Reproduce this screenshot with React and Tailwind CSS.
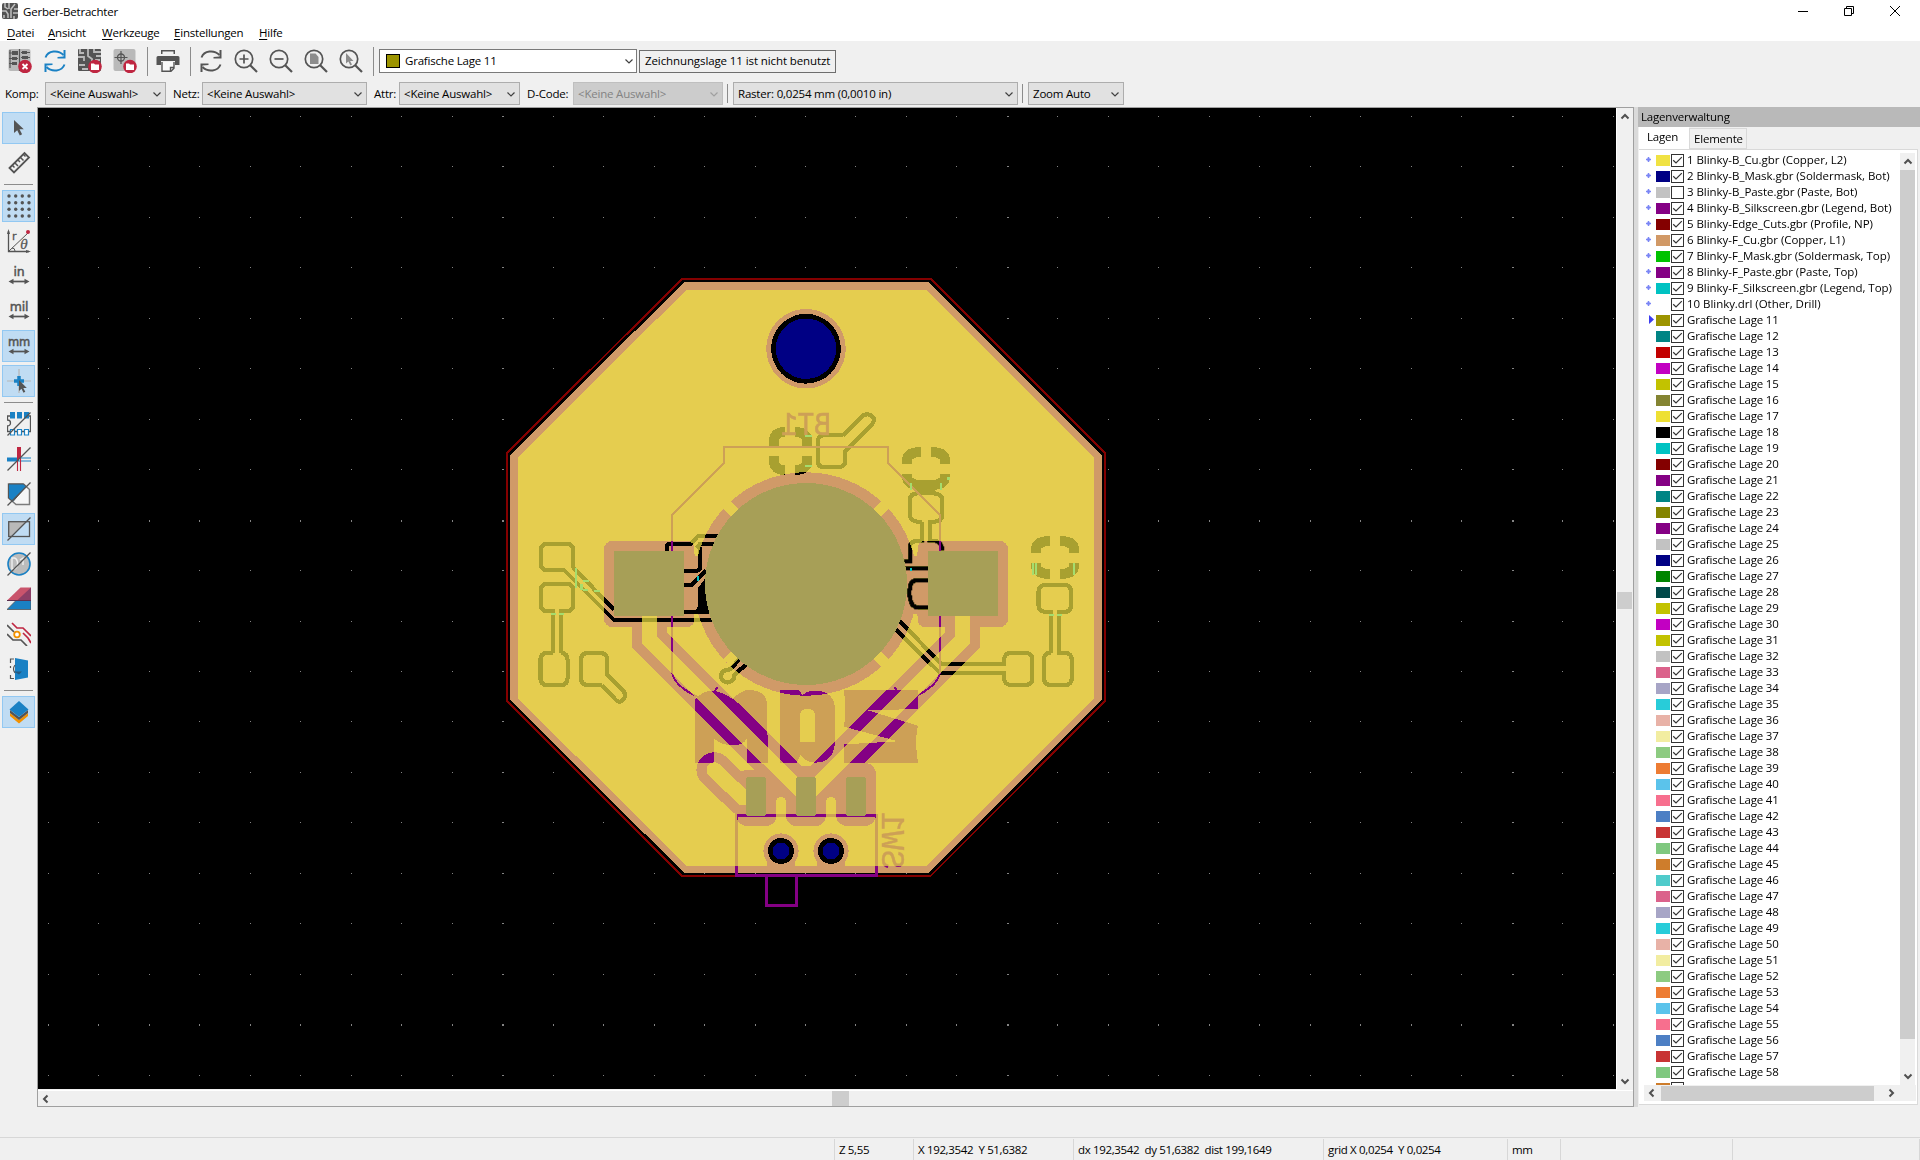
import React from "react";

const LAYERS = [
  ["1 Blinky-B_Cu.gbr (Copper, L2)", "#f0e243"],
  ["2 Blinky-B_Mask.gbr (Soldermask, Bot)", "#000084"],
  ["3 Blinky-B_Paste.gbr (Paste, Bot)", "#c2c2c2"],
  ["4 Blinky-B_Silkscreen.gbr (Legend, Bot)", "#840084"],
  ["5 Blinky-Edge_Cuts.gbr (Profile, NP)", "#840000"],
  ["6 Blinky-F_Cu.gbr (Copper, L1)", "#d19966"],
  ["7 Blinky-F_Mask.gbr (Soldermask, Top)", "#00c200"],
  ["8 Blinky-F_Paste.gbr (Paste, Top)", "#840084"],
  ["9 Blinky-F_Silkscreen.gbr (Legend, Top)", "#00c2c2"],
  ["10 Blinky.drl (Other, Drill)", "#ffffff"],
  ...[
    "#9c9400", "#008484", "#c20000", "#c200c2", "#c2c200", "#848432", "#eee033", "#000000", "#00c2c2", "#840000",
    "#840084", "#008484", "#848400", "#840084", "#c2c2c2", "#000084", "#008400", "#004848", "#c2c200", "#c200c2",
    "#c2c200", "#c2c2c2", "#db628b", "#a7a5c6", "#28ccd9", "#e8b2a7", "#f2eda1", "#8dcb81", "#ed7c33", "#5bc3eb",
    "#f76f8e", "#4d7fc4", "#c83434", "#7fc87f", "#ce7d2c", "#4fcbcb", "#db628b", "#a7a5c6", "#28ccd9", "#e8b2a7",
    "#f2eda1", "#8dcb81", "#ed7c33", "#5bc3eb", "#f76f8e", "#4d7fc4", "#c83434", "#7fc87f",
  ].map((c, i) => [`Grafische Lage ${i + 11}`, c]),
  ["", "#ce7d2c"],
];

const G = "#545454";
const B = "#1a81c4";
const R = "#bf2641";

const Svg = ({ s = 24, vb = "0 0 24 24", children }) => (
  <svg width={s} height={s} viewBox={vb} fill="none" className="block shrink-0">{children}</svg>
);

function Arrow({ d = "down", color = "#505050", w = 2 }) {
  const p = { down: "M1.5 3.5 5 7 8.5 3.5", up: "M1.5 6.5 5 3 8.5 6.5", left: "M6.5 1.5 3 5 6.5 8.5", right: "M3.5 1.5 7 5 3.5 8.5" }[d];
  return <Svg s={10} vb="0 0 10 10"><path d={p} stroke={color} strokeWidth={w} /></Svg>;
}

/* ---------- toolbar icons ---------- */
const BoardArt = () => (
  <>
    <rect x="0.5" y="0" width="22" height="22" rx="2" fill="#b9b9b9" />
    <path d="M4 2h6v4H4zM4 8h5v3H4zM4 13h5v3H4zM14 2h5v3h-5zM14 7h6v3h-6zM14 12h6v3h-6z" fill={G} />
    <path d="M1 4h8M1 9.500h9M1 14.500h8M11.500 0v22M13 3.500h9M13 8.500h9M13 13.500h9M2 1v18" stroke={G} strokeWidth="1.200" />
  </>
);
const Folder = () => (
  <>
    <circle cx="17" cy="17.500" r="6.800" fill={R} />
    <path d="M13 14.500h3l1 1h4v5.500h-8z" fill="#fff" />
  </>
);
const ClearIcon = () => (
  <Svg><BoardArt /><circle cx="17" cy="17.500" r="6.800" fill={R} /><path d="m14.500 15 5 5m0-5-5 5" stroke="#fff" strokeWidth="1.800" /></Svg>
);
const OpenIcon = () => (
  <Svg><rect x="0" y="0" width="23" height="22" rx="1" fill={G} /><path d="M2 0v4h4M10 0v7l4 3v11M16 0v3h7M0 8h6v4M18 7h5M17 11h5M1 16h6M4 20h6" stroke="#b9b9b9" strokeWidth="1.800" /><Folder /></Svg>
);
const DrillIcon = () => (
  <Svg><rect x="0.500" y="0" width="22" height="22" rx="2" fill="#b9b9b9" /><circle cx="8" cy="8.500" r="3.500" stroke={G} strokeWidth="1.300" /><path d="M8 2v13M1.500 8.500h13" stroke={G} strokeWidth="1.200" /><Folder /></Svg>
);
const Refresh = ({ c = G }) => (
  <Svg><path d="M2.500 8.500C5 1.500 15 .500 20.500 6M21.500 15.500C19 22.500 9 23.500 3.500 18" stroke={c} strokeWidth="1.900" /><path d="M22.500 1v8.500H14.500V8l6-.500V1zM1.500 23v-8.500h8V16l-6 .500V23z" fill={c} /></Svg>
);
const Printer = () => (
  <Svg><path d="M5 1h14v4h-1.500V2.500h-11V5H5z" fill={G} /><path d="M2 7h20q1.500 0 1.500 1.500V16H19v-4H5v4H.500V8.500Q.500 7 2 7z" fill={G} /><path d="M6 13v9.200h9l3-3V13z" fill="#fafafa" /><path d="M6 13v9.200h9l3-3V13M14.500 22v-3.500H18" stroke={G} strokeWidth="1.400" /></Svg>
);
const Mag = ({ children }) => (
  <Svg><circle cx="10" cy="10" r="8.700" stroke={G} strokeWidth="1.700" /><path d="m16.200 16.200 6.800 6.800" stroke={G} strokeWidth="2.200" />{children}</Svg>
);
const AppIcon = () => (
  <Svg s={16} vb="0 0 16 16"><rect width="16" height="16" rx="2" fill={G} /><path d="M3 0v4l3 2M7 0v6M13 1 9 6v9M0 8h4l2 3v4M12 6h4M11 10h5M2 12v3M12 13v3" stroke="#c0c0c0" strokeWidth="1.500" /></Svg>
);

/* ---------- left toolbar icons ---------- */
const unit = (t) => (
  <Svg>
    <text x="12" y="11.500" textAnchor="middle" fontFamily="DejaVu Sans" fontSize={t === "mm" ? 11.500 : 12.500} stroke={G} strokeWidth=".5" fill={G}>{t}</text>
    <path d="M5 17.500h14" stroke={G} strokeWidth="1.700" /><path d="M1.500 17.500 6.500 14.800v5.400zM22.500 17.500l-5-2.700v5.400z" fill={G} />
  </Svg>
);
const Slash = () => <path d="M.500 23.500 23.500.500" stroke={G} strokeWidth="1.200" />;
const LEFT = [
  [1, <Svg><path d="M7 4v13l3.200-2.800 2.600 5.200 2.300-1.200-2.600-5h4.300z" fill={G} /></Svg>],
  [0, <Svg><path d="M2.500 17 17.500 2l4.500 4.500L7 21.500z" stroke={G} strokeWidth="1.800" /><path d="m5.500 14.500 2 2m.500-4.500 3 3m0-6 2 2m.500-4.500 3 3m0-6 2 2" stroke={G} strokeWidth="1.500" /></Svg>],
  "sep",
  [1, <Svg>{[2, 8.700, 15.300, 22].map((y) => [2, 8.700, 15.300, 22].map((x) => <circle key={x + "-" + y} cx={x} cy={y} r="1.700" fill={G} />))}</Svg>],
  [0, <Svg><path d="M1.500 2v20.500H22" stroke={G} strokeWidth="1.300" /><path d="M1.500 0 0 5h3zM24 22.500l-5-1.500v3z" fill={G} /><path d="M2 22 21 4M5 19q3 0 3 3" stroke={G} strokeWidth="1" /><circle cx="21" cy="3" r="2" fill={R} /><text x="5" y="10.500" fontFamily="DejaVu Sans" fontSize="11" stroke={G} strokeWidth=".3" fill={G}>r</text><text x="13.500" y="19.500" fontFamily="DejaVu Serif" fontStyle="italic" fontSize="12" stroke={G} strokeWidth=".3" fill={G}>θ</text></Svg>],
  [0, unit("in")],
  [0, unit("mil")],
  [1, unit("mm")],
  [1, <Svg><path d="M12 0v24M0 12h24" stroke="#b5b5b5" strokeWidth="1.200" /><path d="M12 7v10M7 12h10" stroke={B} strokeWidth="3.500" /><path d="M12 11v11l2.500-2.200 2 4 1.800-1-2-3.800h3.500z" fill={G} /></Svg>],
  "sep",
  [0, <Svg><path d="M3.500 4H.500v4a3 3 0 0 1 0 6v5.500h23V4h-3" stroke={G} strokeWidth="1.300" /><path d="M3 0h5v6.500H3zM10 0h5v6.500h-5zM17 0h5v6.500h-5z" fill={B} /><path d="M3.500 17.500h4v5.500h-4zM10.500 17.500h4v5.500h-4zM17.500 17.500h4v5.500h-4z" fill="#fff" stroke={B} strokeWidth="1.200" /><Slash /></Svg>],
  [0, <Svg><path d="M0 12.500h12" stroke={B} strokeWidth="4" /><path d="M12 11h12M12 14h12" stroke={B} strokeWidth="1.100" /><path d="M12 0v12" stroke={R} strokeWidth="4" /><path d="M10.500 12v12M13.500 12v12" stroke={R} strokeWidth="1.100" /><Slash /></Svg>],
  [0, <Svg><path d="M1.500 2h15l6 5.500v15H9L1.500 16z" fill="#f6f6f6" stroke="#7b7b7b" strokeWidth="1.500" /><path d="M1.500 2h15l2.500 2.500L6 19.500 1.500 16z" fill={B} stroke={G} strokeWidth="1" /><Slash /></Svg>],
  [1, <Svg><path d="M2 5h17L3.500 19.500H2z" fill="#b9b9b9" /><rect x="1.700" y="4.700" width="20.800" height="14.800" stroke={G} strokeWidth="1.300" /><Slash /></Svg>],
  [0, <Svg><circle cx="12" cy="12" r="11" fill="#bcbcbc" stroke={B} strokeWidth="1.600" /><path d="M5 6v11h2.500q3-1 3-5.500t-3-5.500zM13 8l3-2v7" stroke="#f0f0f0" strokeWidth="1.400" /><Slash /></Svg>],
  [0, <Svg><path d="M0 22.500 10 12.500h14v10z" fill={B} stroke={G} strokeWidth=".8" /><path d="M0 13.500 13.500.500H24v13z" fill="#c9546c" /><path d="M24 .500v13H10z" fill="#8c3f66" /><path d="M0 13.500h24" stroke="#5c3050" strokeWidth="1" /></Svg>],
  [0, <Svg><path d="M5 1l5 5h6l8 8M16 11l5 5v0l3 5" stroke={R} strokeWidth="1.700" /><path d="M0 3l7 7M10 12M0 12l6 6h8l6 6" stroke={G} strokeWidth="1.700" /><circle cx="10" cy="12.500" r="2.800" fill="#fff" stroke="#f29100" strokeWidth="1.800" /></Svg>],
  [0, <Svg><path d="M8 1v22l13-2.500v-17z" fill={B} /><path d="M7 2H3.500v4M3.500 18v3.500H7M3.500 9v2" stroke={G} strokeWidth="1.200" /><path d="M8 8q-3 4 0 8" stroke={G} strokeWidth="1.200" /><path d="M7 14.500h8l-3 3z" fill="#255a80" /></Svg>],
  "sep",
  [1, <Svg><path d="m3 13 9 7 9-7v3l-9 7.500L3 16z" fill="#f29100" /><path d="m3 10 9 7 9-7v3l-9 7L3 13z" fill={G} /><path d="m12 1 9.500 8.500L12 17 2.500 9.500z" fill={B} /></Svg>],
];

/* ---------- board drawing ---------- */
const OCT = "684.300,282 929,282 1101.500,455.300 1101.500,700 929,873 684.300,873 510,700 510,455.300";
const OCT_IN = "686.200,290 926.600,290 1094,457 1094,698.300 926.600,866 686.200,866 518.200,698.300 518.200,457";

function Copper({ o, y }) {
  return (
    <>
      <g fill={o}>
        <rect x="604" y="541" width="91" height="86" rx="8" />
        <rect x="917" y="541" width="91" height="86" rx="8" />
        <rect x="686" y="556" width="30" height="58" />
        <rect x="896" y="556" width="30" height="58" />
      </g>
      <g fill="none" stroke={o} strokeWidth="35.500">
        <path d="M649.300 610V639.500L806 796" />
        <path d="M962.700 610V639.500L806 796" />
        <path d="M714.200 770 743 797.500H756" strokeLinecap="round" strokeLinejoin="round" />
      </g>
      <g fill={o}>
        <rect x="736.500" y="770" width="40" height="56" rx="10" />
        <rect x="786" y="770" width="40" height="56" rx="10" />
        <rect x="836" y="763" width="40" height="63" rx="11" />
        <path d="M745 770 790 815H822L866 768 850 762 806 780 760 770zM800 766h12v20h-12z" />
      </g>
      <circle cx="806" cy="584" r="106" fill="none" stroke={o} strokeWidth="11.500" />
      <g stroke={y} fill="none">
        <path d="M727 505 740 518M885 505 872 518M727 663 740 650M885 663 872 650" strokeWidth="10.500" />
        <path d="M649.300 616V639.500L806 796" strokeWidth="15.500" />
        <path d="M962.700 616V639.500L806 796" strokeWidth="15.500" />
        <path d="M714.200 770 743 797.500H756" strokeWidth="15.500" strokeLinecap="round" />
        <path d="M781 802V826M831 802V826" strokeWidth="10" strokeLinecap="round" />
        <path d="M696 545v7M915 545v7M696 616v6M915 616v6" strokeWidth="5" strokeLinecap="round" />
      </g>
    </>
  );
}

const Frag = ({ x, y, w, h, g1, g2, v1, v2 }) => {
  const r = 9, a = x + 5, b = x + w - 5, t = y + 5, u = y + h - 5;
  return (
    <path strokeWidth="10" d={`M${a} ${v1}V${t + r}Q${a} ${t} ${g1} ${t}M${b} ${v1}V${t + r}Q${b} ${t} ${g2} ${t}M${a} ${v2}V${u - r}Q${a} ${u} ${g1} ${u}M${b} ${v2}V${u - r}Q${b} ${u} ${g2} ${u}`} />
  );
};

const Traces = ({ c }) => (
  <g fill="none" stroke={c} strokeWidth="4.200">
    <path d="M564.700 570H547Q541 570 541 564V550Q541 544 547 544H567Q573 544 573 550V567L614 610" />
    <path d="M564 570 614 620H711.700" />
    <path d="M553.300 653V611H547Q541 611 541 605V590Q541 584 547 584H567Q573 584 573 590V605Q573 611 567 611H561V653" />
    <path d="M553.300 653H547Q540.400 653 540.400 660V678Q540.400 685 547 685H561Q567.600 685 567.600 678V660Q567.600 653 561 653" />
    <path d="M602 685H588Q581 685 581 678V660Q581 653 588 653H600Q607.300 653 607.300 660V675L623 690Q627 696 623 700T615 699L602 685" />
    <g transform="translate(530 520) scale(.33333)" strokeWidth="12.500">
      <path d="M410 93V84Q410 71 422 71H482L505 47H570M560 71H510L500 85M511 80V137Q511 153 495 153H462M462 195H485L528 150" />
      <path d="M503 205 528 172 540 282H462V270H490Q503 270 503 258z" fill={c} stroke="none" />
    </g>
    <g transform="translate(500 270) scale(.3954 .33333)">
      <path vectorEffect="non-scaling-stroke" d="M1067 755H1055Q1037 752 1037 735V690Q1037 670 1057 670H1098Q1118 672 1118 690V735Q1118 755 1098 755H1087V812H1100Q1118 815 1118 842M1067 755V812H1055Q1037 815 1037 830V873H1023M1025 895H1090M1090 930H1055Q1037 932 1037 955L1034 965 1037 985Q1040 1013 1060 1013H1090" />
      <path vectorEffect="non-scaling-stroke" d="M868 495H820Q804 497 804 515V572Q804 592 820 592H856Q873 590 873 572V545L940 465Q955 440 930 433 920 432 912 443L868 497" />
    </g>
    <g transform="translate(500 590) scale(.3954 .33333)">
      <path vectorEffect="non-scaling-stroke" d="M1009 92 1118 223H1275V210Q1275 188 1295 188H1328Q1346 190 1346 208V265Q1346 285 1328 285H1295Q1275 285 1275 265V249H1113L996 112" />
      <path vectorEffect="non-scaling-stroke" d="M1393 188V66H1380Q1362 64 1362 46V5Q1362-16 1382-16H1425Q1444-16 1444 5V46Q1444 66 1425 66H1414V188H1428Q1446 190 1446 208V265Q1446 285 1428 285H1395Q1376 285 1376 265V208Q1376 188 1393 188" />
      <path vectorEffect="non-scaling-stroke" d="M607 205 583 238Q555 240 560 265 575 290 592 265V255L622 224" />
    </g>
    <Frag x={769} y={427} w={43} h={48} g1={785} g2={795} v1={446} v2={456} />
    <Frag x={902} y={447} w={48} h={43} g1={921} g2={931} v1={464} v2={474} />
    <Frag x={1031} y={536} w={48} h={43} g1={1050} g2={1060} v1={553} v2={563} />
    <path d="M912 480H940L936 489 932 493H918L912 488z" fill={c} stroke="none" />
  </g>
);

const Silk = ({ c }) => (
  <g fill={c}>
    <g fill="none" stroke={c} strokeWidth="2">
      <path d="M672 628V515L724.200 463V447H888.300V463L940 515V628" />
      <path d="M672 620V672Q674 686 698 697M940 620V672Q938 686 914 697" />
      <rect x="736.400" y="815.700" width="140" height="59.800" strokeWidth="2.800" />
      <path d="M766.500 876V905.500H796.500V876" strokeWidth="3" />
      <path d="M714 692q3-3 3-5M898 692q-3-3-3-5" />
    </g>
    <text transform="matrix(-1 0 0 1 831 435)" fontFamily="Liberation Mono" fontSize="34" stroke={c} strokeWidth=".6" textLength="50" lengthAdjust="spacingAndGlyphs">BT1</text>
    <text transform="matrix(0 -1 -1 0 881.500 869)" fontFamily="Liberation Mono" fontSize="34" stroke={c} strokeWidth=".4" textLength="57" lengthAdjust="spacingAndGlyphs">SW1</text>
    <g transform="translate(500 590) scale(.3954 .33333)">
      <path d="M493 518V330Q510 302 540 302 570 310 588 327 610 300 630 300 675 302 675 345L678 518H625V445Q615 467 585 466 560 465 541 445V518z" />
      <path fillRule="evenodd" d="M708 518V301H757L765 315Q780 300 800 302 847 305 847 360V455Q845 518 797 518 770 515 760 495L750 518zM759 456H797V375Q795 357 778 357 760 357 759 375z" />
      <path d="M870 300H1057V357L930 361 1057 407Q1048 450 1057 518H870V463L1007 454 870 410Q876 370 870 300z" />
    </g>
  </g>
);

function Board() {
  const dots = [];
  for (let i = 0; i < 32; i++)
    for (let j = 0; j < 20; j++)
      dots.push(<rect key={i + "-" + j} x={Math.round(47.800 + i * 50.480)} y={Math.round(116 + j * 50.450)} width={i % 10 === 9 ? 2 : 1} height={j % 10 === 8 ? 2 : 1} />);
  return (
    <svg width="1578" height="981" viewBox="38 108 1578 981" className="block bg-black" shapeRendering="crispEdges">
      <mask id="exposed" maskUnits="userSpaceOnUse" x="38" y="108" width="1578" height="981">
        <rect x="38" y="108" width="1578" height="981" fill="#fff" />
        <polygon points={OCT_IN} fill="#000" />
        <Copper o="#fff" y="#000" />
      </mask>
      <g fill="#848484">{dots}</g>
      <polygon points="681.900,279 930.600,279 1105.300,453.300 1105.300,701 930.600,876 681.900,876 506.700,701 506.700,453.300" fill="none" stroke="#840000" strokeWidth="2" />
      <polygon points={OCT} fill="#d09a68" />
      <polygon points={OCT_IN} fill="#e5cd4f" />
      <Copper o="#d09a68" y="#e5cd4f" />
      <Traces c="#a8a030" />
      <g mask="url(#exposed)"><Traces c="#000" /></g>
      <Silk c="#cda056" />
      <g mask="url(#exposed)"><Silk c="#840084" /></g>
      <g fill="#a5dd6e">
        <path d="M575 568h2v20h-2zM580 584h3v6h-3zM583 580h6v2h-6zM583 589h5v2h-5zM594 590h6v2h-6zM551 613h5v2h-5zM559 613h5v2h-5zM805 435h7v2h-7zM805 465h7v2h-7zM910 483h2v7h-2zM940 483h2v7h-2zM947 477h3v3h-3zM1032 563h2v12h-2zM1035 563h2v12h-2zM1073 563h2v12h-2zM1049 614h5v2h-5zM1057 614h5v2h-5z" />
      </g>
      <path d="M697 576h2v5h-2zM910 568h2v3h-2z" fill="#00c2c2" />
      <g fill="#a79f57">
        <circle cx="806" cy="584" r="101" />
        <rect x="614" y="551" width="70" height="65" />
        <rect x="928" y="551" width="70" height="65" />
        <rect x="746" y="777" width="20" height="39" rx="3" />
        <rect x="796" y="777" width="20" height="39" rx="3" />
        <rect x="846" y="777" width="20" height="39" rx="3" />
      </g>
      <circle cx="806" cy="348.700" r="39.800" fill="#d09a68" />
      <circle cx="806" cy="348.700" r="34.900" fill="#000" />
      <circle cx="806" cy="348.700" r="30.200" fill="#000084" />
      {[781, 831].map((x) => (
        <g key={x}>
          <rect x={x - 14} y="860" width="28" height="7" fill="#d09a68" />
          <circle cx={x} cy="851" r="17.600" fill="#d09a68" />
          <circle cx={x} cy="851" r="13" />
          <circle cx={x} cy="851" r="8.400" fill="#000084" />
        </g>
      ))}
    </svg>
  );
}

/* ---------- chrome ---------- */
const Combo = ({ w, children, disabled }) => (
  <div className={"flex h-[23px] shrink-0 items-center justify-between border pr-[3px] pl-[4px] " + w + (disabled ? " border-[#bfbfbf] bg-[#cccccc] text-[#838383]" : " border-[#adadad] bg-[#e1e1e1]")}>
    <span>{children}</span>
    <Arrow w={1.200} color={disabled ? "#a0a0a0" : "#404040"} />
  </div>
);
const VSep = ({ m, h = "h-[29px]" }) => <div className={"w-px shrink-0 bg-[#8c8c8c] " + h + " " + m} />;
const MenuItem = ({ m, children }) => (
  <span className={m}><span className="underline underline-offset-2">{children[0]}</span>{children.slice(1)}</span>
);

function Row({ name, color, i }) {
  return (
    <div className="flex h-4 shrink-0 items-start whitespace-nowrap">
      <div className="flex w-[16px] shrink-0 justify-center pt-[3px]">
        {i < 10 && <Svg s={7} vb="0 0 7 7"><path d="M3.500 1v5M1 3.500h5" stroke="#7b86f5" strokeWidth="1.500" /><path d="M3.500 1.500l2 2-2 2-2-2z" fill="#7b86f5" /></Svg>}
        {i === 10 && <div className="-mt-px ml-[6px]"><Svg s={9} vb="0 0 9 9"><path d="M2 0v9l5-4.500z" fill="#3c3cf0" /></Svg></div>}
      </div>
      <div className="mt-[2px] h-[11px] w-[14px] shrink-0" style={{ backgroundColor: color }} />
      <div className="mt-px ml-px flex h-[13px] w-[13px] shrink-0 items-center justify-center border border-[#333] bg-white">
        {i !== 2 && <Svg s={11} vb="0 0 11 11"><path d="M1.200 5.300 4 8 9.800 2.200" stroke="#333" strokeWidth="1.200" /></Svg>}
      </div>
      <span className={"-mt-px ml-[3px] " + (i < 10 ? "tracking-[-0.04px]" : "tracking-[-0.2px]")}>{name}</span>
    </div>
  );
}

export default function App() {
  return (
    <div className="flex h-[1160px] w-[1920px] flex-col overflow-hidden bg-[#f0f0f0] font-['Open_Sans',sans-serif] text-[11.5px] leading-4 tracking-[-0.2px] whitespace-pre text-black">
      <div className="flex h-[22px] shrink-0 items-center bg-white pl-[2px]">
        <AppIcon />
        <span className="ml-[5px] pt-px">Gerber-Betrachter</span>
        <div className="ml-auto flex items-center gap-[36px] pr-[20px]">
          <Svg s={10} vb="0 0 10 10"><path d="M0 5.500h10" stroke="#000" /></Svg>
          <Svg s={10} vb="0 0 10 10"><path d="M.500 2.500h7v7h-7zM2.500 2.500v-2h7v7h-2" stroke="#000" /></Svg>
          <Svg s={10} vb="0 0 10 10"><path d="m0 0 10 10M10 0 0 10" stroke="#000" /></Svg>
        </div>
      </div>
      <div className="flex h-[19px] shrink-0 items-start bg-white pt-[3px]">
        <MenuItem m="ml-[7px] w-[41px]">Datei</MenuItem>
        <MenuItem m="w-[54px]">Ansicht</MenuItem>
        <MenuItem m="w-[72px]">Werkzeuge</MenuItem>
        <MenuItem m="w-[85px]">Einstellungen</MenuItem>
        <MenuItem m="">Hilfe</MenuItem>
      </div>

      <div className="flex h-[40px] shrink-0 items-center">
        <div className="flex items-center gap-[11px] pl-[8px]"><ClearIcon /><Refresh c={B} /><OpenIcon /><DrillIcon /></div>
        <VSep m="ml-[10px]" />
        <div className="ml-[8px]"><Printer /></div>
        <VSep m="ml-[10px]" />
        <div className="ml-[8px] flex items-center gap-[11px]">
          <Refresh />
          <Mag><path d="M10 5.500v9M5.500 10h9" stroke={G} strokeWidth="1.700" /></Mag>
          <Mag><path d="M5.500 10h9" stroke={G} strokeWidth="1.700" /></Mag>
          <Mag><path d="M6 4.500h5.500L14.500 8v7H6z" fill="#8c8c8c" /></Mag>
          <Mag><path d="M7 4v10.500l2.400-2 2 4 1.600-.9-1.900-3.600h3.400z" fill="#8c8c8c" /></Mag>
        </div>
        <VSep m="ml-[10px]" />
        <div className="ml-[5px] flex h-[24px] w-[258px] items-center border border-[#7a7a7a] bg-white px-[6px]">
          <div className="h-[14px] w-[14px] border border-black bg-[#9c9400]" />
          <span className="ml-[5px]">Grafische Lage 11</span>
          <div className="-mr-[4px] ml-auto"><Arrow w={1.200} color="#404040" /></div>
        </div>
        <div className="ml-[2px] flex h-[23px] w-[197px] items-center border border-[#6e6e6e] pl-[5px] tracking-[-0.1px]">Zeichnungslage 11 ist nicht benutzt</div>
      </div>

      <div className="flex h-[26px] shrink-0 items-center pb-px">
        <span className="w-[45px] pl-[5px]">Komp:</span><Combo w="w-[121px]">{"<Keine Auswahl>"}</Combo>
        <span className="w-[36px] pl-[7px]">Netz:</span><Combo w="w-[165px]">{"<Keine Auswahl>"}</Combo>
        <span className="w-[32px] pl-[7px]">Attr:</span><Combo w="w-[121px]">{"<Keine Auswahl>"}</Combo>
        <span className="w-[53px] pl-[7px]">D-Code:</span><Combo w="w-[150px]" disabled>{"<Keine Auswahl>"}</Combo>
        <VSep m="ml-[4px]" h="h-[19px]" />
        <Combo w="ml-[5px] w-[285px]">Raster: 0,0254 mm (0,0010 in)</Combo>
        <VSep m="ml-[4px]" h="h-[19px]" />
        <Combo w="ml-[5px] w-[96px]">Zoom Auto</Combo>
      </div>

      <div className="flex h-[1000px] shrink-0">
        <div className="flex w-[37px] shrink-0 flex-col pt-[3px]">
          {LEFT.map((it, k) => it === "sep" ? (
            <div key={k} className="flex h-[8px] shrink-0 items-center pl-[4px]"><div className="h-px w-[29px] bg-[#8c8c8c]" /></div>
          ) : (
            <div key={k} className="flex h-[35px] shrink-0 items-center pl-[2px]">
              <div className={"flex h-[32px] w-[33px] items-center justify-center border " + (it[0] ? "border-[#92c8f2] bg-[#c0dcf3]" : "border-transparent")}>{it[1]}</div>
            </div>
          ))}
        </div>

        <div className="flex w-[1597px] shrink-0 flex-col border border-[#a0a0a0]">
          <div className="flex h-[982px] shrink-0">
            <Board />
            <div className="flex flex-1 flex-col items-center border-l border-white py-[4px]">
              <Arrow d="up" />
              <div className="mt-[470px] mb-auto h-[17px] w-[15px] self-start bg-[#cdcdcd]" />
              <Arrow />
            </div>
          </div>
          <div className="flex flex-1 items-center border-t border-white pl-[3px]">
            <Arrow d="left" />
            <div className="ml-[781px] h-[15px] w-[17px] bg-[#cdcdcd]" />
          </div>
        </div>
        <div className="w-[4px] shrink-0 bg-[#dadada]" />

        <div className="flex w-[282px] shrink-0 flex-col">
          <div className="flex h-[20px] shrink-0 items-center bg-[#b9b9b9] pl-[3px]">Lagenverwaltung</div>
          <div className="flex h-[22px] shrink-0 items-end pl-px">
            <div className="h-[22px] w-[50px] bg-white pt-[2px] pl-[8px]">Lagen</div>
            <div className="h-[21px] w-[58px] border border-[#d9d9d9] pt-[2px] pl-[4px]">Elemente</div>
          </div>
          <div className="ml-px flex h-[956px] w-[279px] flex-col border border-l-0 border-[#d9d9d9] bg-white pt-[3px] pl-px">
            <div className="flex h-[932px] shrink-0 overflow-hidden">
              <div className="flex h-full w-[260px] flex-col overflow-hidden">
                {LAYERS.map(([n, c], i) => <Row key={i} name={n} color={c} i={i} />)}
              </div>
              <div className="flex w-[15px] flex-col items-center bg-[#f0f0f0]">
                <div className="flex h-[17px] items-center"><Arrow d="up" /></div>
                <div className="h-[869px] w-full bg-[#cdcdcd]" />
                <div className="mt-[32px]"><Arrow /></div>
              </div>
            </div>
            <div className="ml-[4px] flex h-[16px] w-[272px] shrink-0 items-center bg-[#f0f0f0]">
              <div className="ml-[3px]"><Arrow d="left" /></div>
              <div className="ml-[4px] h-[15px] w-[213px] bg-[#cdcdcd]" />
              <div className="ml-[12px]"><Arrow d="right" /></div>
            </div>
          </div>
        </div>
      </div>

      <div className="h-[30px] shrink-0" />
      <div className="flex flex-1 items-stretch border-t border-[#d7d7d7] pt-px leading-[21px] tracking-[-0.35px]">
        <div className="w-[834px]" />
        <div className="w-[79px] border-l border-[#d7d7d7] pl-[4px]">Z 5,55</div>
        <div className="w-[160px] border-l border-[#d7d7d7] pl-[4px]">X 192,3542  Y 51,6382</div>
        <div className="w-[250px] border-l border-[#d7d7d7] pl-[4px]">dx 192,3542  dy 51,6382  dist 199,1649</div>
        <div className="w-[184px] border-l border-[#d7d7d7] pl-[4px]">grid X 0,0254  Y 0,0254</div>
        <div className="w-[53px] border-l border-[#d7d7d7] pl-[4px]">mm</div>
        <div className="w-[172px] border-l border-[#d7d7d7]" />
        <div className="w-[188px] border-x border-[#d7d7d7]" />
      </div>
    </div>
  );
}
